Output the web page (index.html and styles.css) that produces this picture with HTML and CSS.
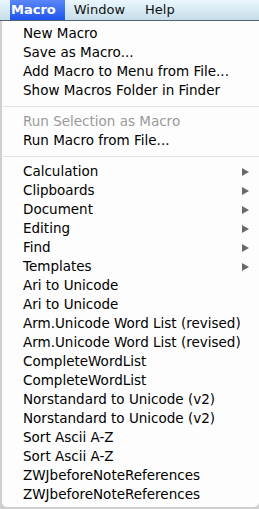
FILE: index.html
```html
<!DOCTYPE html>
<html lang="en">
<head>
    <meta charset="UTF-8">
    <title>Macro menu</title>
    <link rel="stylesheet" href="styles.css">
</head>
<body>

<div class="menubar">
    <div class="menubar-item open">Macro</div>
    <div class="menubar-item">Window</div>
    <div class="menubar-item">Help</div>
</div>

<div class="menu">
    <div class="item">New Macro</div>
    <div class="item">Save as Macro...</div>
    <div class="item">Add Macro to Menu from File...</div>
    <div class="item">Show Macros Folder in Finder</div>
    <div class="separator"></div>
    <div class="item disabled">Run Selection as Macro</div>
    <div class="item">Run Macro from File...</div>
    <div class="separator"></div>
    <div class="item sub">Calculation</div>
    <div class="item sub">Clipboards</div>
    <div class="item sub">Document</div>
    <div class="item sub">Editing</div>
    <div class="item sub">Find</div>
    <div class="item sub">Templates</div>
    <div class="item">Ari to Unicode</div>
    <div class="item">Ari to Unicode</div>
    <div class="item">Arm.Unicode Word List (revised)</div>
    <div class="item">Arm.Unicode Word List (revised)</div>
    <div class="item">CompleteWordList</div>
    <div class="item">CompleteWordList</div>
    <div class="item">Norstandard to Unicode (v2)</div>
    <div class="item">Norstandard to Unicode (v2)</div>
    <div class="item">Sort Ascii A-Z</div>
    <div class="item">Sort Ascii A-Z</div>
    <div class="item">ZWJbeforeNoteReferences</div>
    <div class="item">ZWJbeforeNoteReferences</div>
</div>

</body>
</html>
```

FILE: styles.css
```css
* { margin: 0; padding: 0; box-sizing: border-box; font-family: 'DejaVu Sans', sans-serif; }

body { background-color: #cfcfcf; width: 259px; height: 509px; overflow: hidden; }

.menubar { height: 21px; display: flex; padding-left: 10px;
           background: linear-gradient(#eaf7fc, #c6dde9); border-bottom: 1px solid #55636c; }

.menubar-item { font-size: 13px; line-height: 20px; padding: 0 10px 0 10px; color: #111; }

.menubar-item.open { background: linear-gradient(#5a86f7, #1f55ee); color: white; font-weight: bold;
                     padding: 0 9px 0 1px; }
.menubar-item.open + .menubar-item { padding-left: 9px; }

.menu { margin-left: 2px; background-color: #fdfdfd; border-radius: 0 0 5px 5px; padding: 3px 0 3px 0; }

.item { height: 19px; line-height: 19px; font-size: 13.5px; padding-left: 21px; color: #000; position: relative; }

.item.disabled { color: #9a9a9a; }

.item.sub::after { content: ""; position: absolute; right: 10px; top: 6px;
                   border-left: 7px solid #6a6a6a; border-top: 4px solid transparent; border-bottom: 4px solid transparent; }

.separator { height: 12px; display: flex; align-items: center; padding-left: 1px; }
.separator::before { content: ""; flex: 1; height: 1px; background-color: #e2e2e2; }
```
